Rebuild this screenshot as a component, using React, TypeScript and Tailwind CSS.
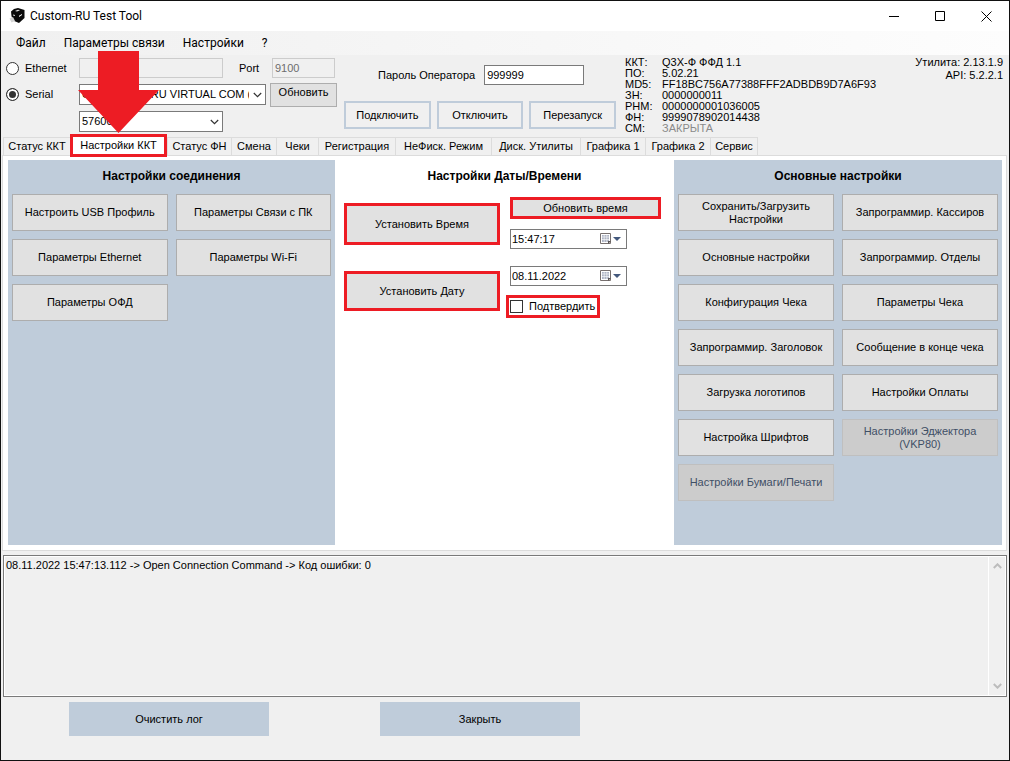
import { useState } from "react";
import clsx from "clsx";

const MENU = ["Файл", "Параметры связи", "Настройки", "?"];

const TABS = [
  { label: "Статус ККТ", width: "w-[67px]" },
  { label: "Настройки ККТ", width: "w-[97px]" },
  { label: "Статус ФН", width: "w-[64px]" },
  { label: "Смена", width: "w-[45px]" },
  { label: "Чеки", width: "w-[42px]" },
  { label: "Регистрация", width: "w-[77px]" },
  { label: "НеФиск. Режим", width: "w-[96px]" },
  { label: "Диск. Утилиты", width: "w-[89px]" },
  { label: "Графика 1", width: "w-[65px]" },
  { label: "Графика 2", width: "w-[65px]" },
  { label: "Сервис", width: "w-[48px]" },
];

const INFO = [
  { name: "ККТ:", value: "Q3X-Ф ФФД 1.1" },
  { name: "ПО:", value: "5.02.21" },
  { name: "MD5:", value: "FF18BC756A77388FFF2ADBDB9D7A6F93" },
  { name: "ЗН:", value: "0000000011" },
  { name: "РНМ:", value: "0000000001036005" },
  { name: "ФН:", value: "9999078902014438" },
  { name: "СМ:", value: "ЗАКРЫТА", muted: true },
];

const CONNECTION = [
  "Настроить USB Профиль", "Параметры Связи с ПК",
  "Параметры Ethernet", "Параметры Wi-Fi",
  "Параметры ОФД",
];

const MAIN_SETTINGS = [
  "Сохранить/Загрузить Настройки", "Запрограммир. Кассиров",
  "Основные настройки", "Запрограммир. Отделы",
  "Конфигурация Чека", "Параметры Чека",
  "Запрограммир. Заголовок", "Сообщение в конце чека",
  "Загрузка логотипов", "Настройки Оплаты",
  "Настройка Шрифтов", "Настройки Эджектора (VKP80)",
  "Настройки Бумаги/Печати",
];

const DISABLED = ["Настройки Эджектора (VKP80)", "Настройки Бумаги/Печати"];

const radioCls = "h-[13px] w-[13px] appearance-none rounded-full border border-[#333] bg-white checked:bg-[#333] checked:shadow-[inset_0_0_0_2px_white]";
const frameBtn = "h-7 border-2 border-[#bfccda] bg-[#f0f0f0] hover:bg-[#e5f1fb]";
const redBtn = "border-[3px] border-[#ed1c24] bg-[#e1e1e1] hover:bg-[#e5f1fb]";
const windowBtn = "flex h-full w-[46px] items-center justify-center hover:bg-[#e5e5e5]";

function PrinterLogo() {
  return (
    <svg viewBox="0 0 16 16" className="h-4 w-4" aria-hidden="true">
      <path d="M2 3.500 5 1l4-1 6.500 2v8L10 15l-6-2.500L2.500 8z" fill="#0a0a0a" />
      <path d="M6 3 9 1.800l2 .5L8 3.600z" fill="#e8e8e8" />
      <path d="M10 7.800 13 6v1l-3 2z" fill="#fff" />
      <path d="M4 6.500l2 .5v1l-2-.5z" fill="#ddd" />
      <path d="M.5 10.500 4 9l2 4-3.500 1.500z" fill="#d4d4d4" />
    </svg>
  );
}

function Chevron({ up, bold, className }: { up?: boolean; bold?: boolean; className?: string }) {
  return (
    <svg viewBox="0 0 9 6" className={clsx("h-1.5 w-[9px]", className)} fill="none" stroke="currentColor" strokeWidth={bold ? 2 : 1.2} aria-hidden="true">
      <path d={up ? "M.8 5l3.700-3.700L8.200 5" : "M.8 1l3.700 3.700L8.200 1"} />
    </svg>
  );
}

function Combo({ label, value, className }: { label: string; value: string; className: string }) {
  return (
    <div className={clsx("relative", className)}>
      <select aria-label={label} className="block h-[21px] w-full appearance-none border border-[#7a7a7a] bg-white pl-0.5 pr-4">
        <option>{value}</option>
      </select>
      <Chevron className="pointer-events-none absolute right-1 top-2 text-[#333]" />
    </div>
  );
}

function Picker({ label, initial }: { label: string; initial: string }) {
  const [value, setValue] = useState(initial);
  return (
    <div className="flex h-5 w-[117px] items-center border border-[#7a7a7a] bg-white">
      <input aria-label={label} value={value} onChange={e => setValue(e.target.value)} className="w-full min-w-0 flex-1 pl-px outline-none" />
      <button aria-label={`${label}: календарь`} className="flex items-center gap-px pr-[5px]">
        <svg viewBox="0 0 12 12" className="h-3 w-3" aria-hidden="true">
          <path d="M.5.5h10v10h-10z" fill="#fff" stroke="#77706f" />
          <path d="M2 2h7v7H2z" fill="#aeb4c4" />
          <path d="M2 4h7M2 6.500h7M4.200 2v7M6.800 2v7" stroke="#fff" strokeWidth=".6" />
          <path d="M8 11V8h3z" fill="#5b5555" />
        </svg>
        <svg viewBox="0 0 8 4" className="h-1 w-2" aria-hidden="true"><path d="M0 0h8L4 4z" fill="#44597d" /></svg>
      </button>
    </div>
  );
}

function ButtonPanel({ title, items }: { title: string; items: string[] }) {
  return (
    <section className="bg-[#bfccda] px-1 pb-11">
      <h2 className="mb-0.5 text-center text-xs font-bold leading-8">{title}</h2>
      <div className="grid auto-rows-[37px] grid-cols-2 gap-2">
        {items.map(item => (
          <button key={item} disabled={DISABLED.includes(item)}
            className="border border-[#adadad] bg-[#e1e1e1] px-2 leading-[13px] hover:bg-[#e5f1fb] disabled:border-[#bfbfbf] disabled:bg-[#ccc] disabled:text-[#3f4f66]">
            {item}
          </button>
        ))}
      </div>
    </section>
  );
}

export default function App() {
  const [mode, setMode] = useState("serial");
  const [tab, setTab] = useState("Настройки ККТ");
  const [password, setPassword] = useState("999999");
  const [log, setLog] = useState("08.11.2022 15:47:13.112 -> Open Connection Command -> Код ошибки: 0");

  return (
    <div className="flex min-h-screen flex-col border border-[#111] bg-[#f0f0f0] font-['Liberation_Sans',Arial,sans-serif] text-[11px] leading-[13px] text-black">
      <header className="flex h-[30px] items-center bg-white pl-2 font-[Roboto,sans-serif] text-xs">
        <PrinterLogo />
        <h1 className="flex-1 pl-[5px]">Custom-RU Test Tool</h1>
        <button aria-label="Свернуть" className={windowBtn}>
          <svg viewBox="0 0 11 11" className="h-[11px] w-[11px]" stroke="#000"><path d="M0 5.500h10" /></svg>
        </button>
        <button aria-label="Развернуть" className={windowBtn}>
          <svg viewBox="0 0 11 11" className="h-[11px] w-[11px]" fill="none" stroke="#000"><path d="M.5.5h9v9h-9z" /></svg>
        </button>
        <button aria-label="Закрыть окно" className={windowBtn}>
          <svg viewBox="0 0 11 11" className="h-[11px] w-[11px]" stroke="#000"><path d="M.5.5l10 10M10.500.5l-10 10" /></svg>
        </button>
      </header>

      <nav className="flex h-6 items-center bg-linear-to-r from-[#f0f0f0] to-[#fdfdfd] pl-1.5 font-[Roboto,sans-serif] text-xs">
        {MENU.map(item => <button key={item} className="px-[9px]">{item}</button>)}
      </nav>

      <div className="relative flex h-[82px] shrink-0">
        <div className="flex w-[343px] shrink-0 flex-col gap-1 pl-[5px] pt-[3px]">
          <div className="flex h-5 items-center">
            <label className="flex w-[73px] items-center gap-1.5">
              <input type="radio" name="mode" checked={mode === "ethernet"} onChange={() => setMode("ethernet")} className={radioCls} />
              Ethernet
            </label>
            <input aria-label="IP адрес" disabled className="h-5 w-36 border border-[#ccc]" />
            <label htmlFor="port" className="w-[49px] pl-4">Port</label>
            <input id="port" disabled defaultValue="9100" className="h-5 w-[63px] border border-[#ccc] px-0.5 text-[#6d6d6d]" />
          </div>
          <div className="flex h-[25px] items-center">
            <label className="flex w-[73px] items-center gap-1.5">
              <input type="radio" name="mode" checked={mode === "serial"} onChange={() => setMode("serial")} className={radioCls} />
              Serial
            </label>
            <Combo label="Порт" value="CUSTOM Q3-RU VIRTUAL COM (" className="w-[187px]" />
            <button className="ml-1 h-6 w-[67px] border border-[#adadad] bg-[#e1e1e1] pb-1">Обновить</button>
          </div>
          <Combo label="Скорость" value="57600" className="ml-[73px] w-36" />
        </div>

        <div className="flex w-[272px] shrink-0 flex-col gap-4 pt-2.5">
          <div className="flex items-center gap-[9px] pl-[34px]">
            <label htmlFor="password">Пароль Оператора</label>
            <input id="password" value={password} onChange={e => setPassword(e.target.value)} className="h-5 w-[100px] border border-[#7a7a7a] bg-white px-0.5" />
          </div>
          <div className="grid grid-cols-3 gap-1.5">
            <button className={frameBtn}>Подключить</button>
            <button className={frameBtn}>Отключить</button>
            <button className={frameBtn}>Перезапуск</button>
          </div>
        </div>

        <dl className="grid flex-1 auto-rows-[11px] grid-cols-[37px_1fr] pl-[9px] pt-0.5 leading-[11px]">
          {INFO.map(row => (
            <div key={row.name} className="contents">
              <dt>{row.name}</dt>
              <dd className={clsx(row.muted && "text-[#8a8a8a]")}>{row.value}</dd>
            </div>
          ))}
        </dl>
        <div className="shrink-0 pr-1.5 pt-px text-right">
          <p>Утилита: 2.13.1.9</p>
          <p>API: 5.2.2.1</p>
        </div>

        <svg viewBox="0 0 82 82" className="pointer-events-none absolute -top-1 left-[77px] z-10 h-[82px] w-[82px]" aria-hidden="true">
          <path d="M20 0h41v39h20L40.500 82 0 39h20z" fill="#ed1c24" />
        </svg>
      </div>

      <div role="tablist" className="flex h-[18px] pl-0.5">
        {TABS.map(t => (
          <button key={t.label} role="tab" aria-selected={tab === t.label} onClick={() => setTab(t.label)}
            className={clsx("shrink-0 whitespace-nowrap", t.width,
              tab === t.label
                ? "z-10 -mt-[3px] h-[23px] border-[3px] border-[#ed1c24] bg-white"
                : "border-l border-t border-[#dcdcdc] last:border-r")}>
            {t.label}
          </button>
        ))}
      </div>

      <main className="ml-px mr-0.5 grid min-h-[396px] grid-cols-[327fr_339fr_328fr] border border-[#dcdcdc] bg-white pb-[5px] pl-[5px] pr-1 pt-1">
        <ButtonPanel title="Настройки соединения" items={CONNECTION} />

        <section className="px-[9px]">
          <h2 className="text-center text-xs font-bold leading-8">Настройки Даты/Времени</h2>
          <div className="grid grid-cols-[156px_1fr] gap-x-2.5">
            <div className="flex flex-col gap-[26px] pt-[11px]">
              <button className={clsx(redBtn, "h-[42px]")}>Установить Время</button>
              <button className={clsx(redBtn, "h-10")}>Установить Дату</button>
            </div>
            <div className="flex flex-col items-start pt-[5px]">
              <button className={clsx(redBtn, "h-[22px] w-[151px]")}>Обновить время</button>
              <div className="mt-2.5 flex flex-col gap-[17px]">
                <Picker label="Время" initial="15:47:17" />
                <Picker label="Дата" initial="08.11.2022" />
              </div>
              <label className="-ml-1 mt-[9px] flex h-[23px] items-center gap-1.5 border-[3px] border-[#ed1c24] pl-px pr-0.5">
                <input type="checkbox" className="h-[13px] w-[13px] appearance-none border border-[#333] bg-white checked:bg-[#333]" />
                Подтвердить
              </label>
            </div>
          </div>
        </section>

        <ButtonPanel title="Основные настройки" items={MAIN_SETTINGS} />
      </main>

      <div className="mx-0.5 mt-1 flex h-[142px] border border-[#7a7a7a] bg-white p-px">
        <textarea aria-label="Лог" readOnly value={log} className="flex-1 resize-none bg-[#f0f0f0] px-px pt-0.5 outline-none" />
        <div className="ml-px flex w-4 flex-col items-center justify-between bg-[#f0f0f0] py-1.5 text-[#bdbdbd]">
          <Chevron up bold />
          <Chevron bold />
        </div>
      </div>

      <footer className="flex gap-[111px] pb-6 pl-[68px] pt-[5px]">
        <button onClick={() => setLog("")} className="h-[34px] w-[200px] bg-[#bfccda]">Очистить лог</button>
        <button className="h-[34px] w-[200px] bg-[#bfccda]">Закрыть</button>
      </footer>
    </div>
  );
}
